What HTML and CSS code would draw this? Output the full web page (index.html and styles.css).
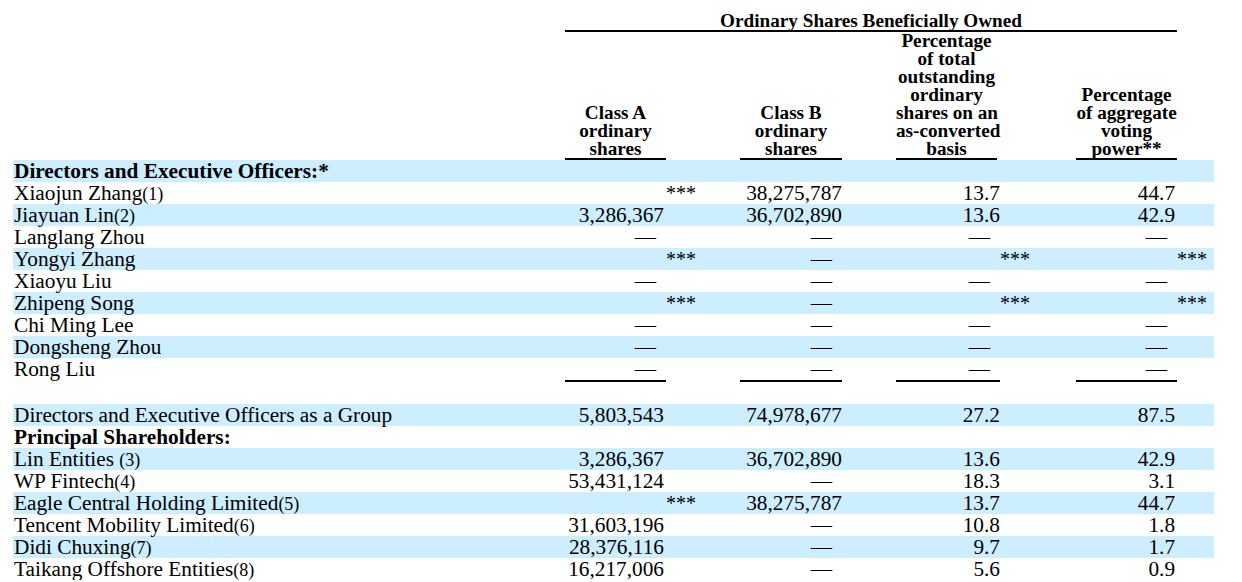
FILE: index.html
```html
<!DOCTYPE html>
<html>
<head>
<meta charset="utf-8">
<title>Ordinary Shares Beneficially Owned</title>
<link rel="stylesheet" href="styles.css">
</head>
<body>
<table class="own">
  <colgroup>
    <col class="c-name"><col class="c-a"><col class="c-at"><col class="c-b"><col class="c-bt"><col class="c-p"><col class="c-pt"><col class="c-v"><col class="c-vt">
  </colgroup>
  <thead>
    <tr class="grp">
      <th></th>
      <th colspan="7" class="grp-h"><div class="grp-title">Ordinary Shares Beneficially Owned</div></th>
      <th></th>
    </tr>
    <tr class="cols">
      <th></th>
      <th class="ch"><div class="ul">Class A<br>ordinary<br>shares</div></th>
      <th></th>
      <th class="ch"><div class="ul">Class B<br>ordinary<br>shares</div></th>
      <th></th>
      <th class="ch"><div class="ul ul-p">Percentage<br>of total<br>outstanding<br>ordinary<br>shares on an<br>as-converted<br>basis</div></th>
      <th></th>
      <th class="ch"><div class="ul">Percentage<br>of aggregate<br>voting<br>power**</div></th>
      <th></th>
    </tr>
  </thead>
  <tbody>
    <tr class="blue sect"><td class="name">Directors and Executive Officers:*</td><td></td><td></td><td></td><td></td><td></td><td></td><td></td><td></td></tr>
    <tr><td class="name">Xiaojun Zhang<span class="fn">(1)</span></td><td class="va"></td><td class="tr"><span class="ast">***</span></td><td class="vb">38,275,787</td><td></td><td class="vp">13.7</td><td></td><td class="vv">44.7</td><td></td></tr>
    <tr class="blue"><td class="name">Jiayuan Lin<span class="fn">(2)</span></td><td class="va">3,286,367</td><td></td><td class="vb">36,702,890</td><td></td><td class="vp">13.6</td><td></td><td class="vv">42.9</td><td></td></tr>
    <tr><td class="name">Langlang Zhou</td><td class="va dash">—</td><td></td><td class="vb dash">—</td><td></td><td class="vp dash">—</td><td></td><td class="vv dash">—</td><td></td></tr>
    <tr class="blue"><td class="name">Yongyi Zhang</td><td class="va"></td><td class="tr"><span class="ast">***</span></td><td class="vb dash">—</td><td></td><td class="vp"></td><td class="tr"><span class="ast">***</span></td><td class="vv"></td><td class="tr"><span class="ast">***</span></td></tr>
    <tr><td class="name">Xiaoyu Liu</td><td class="va dash">—</td><td></td><td class="vb dash">—</td><td></td><td class="vp dash">—</td><td></td><td class="vv dash">—</td><td></td></tr>
    <tr class="blue"><td class="name">Zhipeng Song</td><td class="va"></td><td class="tr"><span class="ast">***</span></td><td class="vb dash">—</td><td></td><td class="vp"></td><td class="tr"><span class="ast">***</span></td><td class="vv"></td><td class="tr"><span class="ast">***</span></td></tr>
    <tr><td class="name">Chi Ming Lee</td><td class="va dash">—</td><td></td><td class="vb dash">—</td><td></td><td class="vp dash">—</td><td></td><td class="vv dash">—</td><td></td></tr>
    <tr class="blue"><td class="name">Dongsheng Zhou</td><td class="va dash">—</td><td></td><td class="vb dash">—</td><td></td><td class="vp dash">—</td><td></td><td class="vv dash">—</td><td></td></tr>
    <tr class="last"><td class="name">Rong Liu</td><td class="va dash rule">—</td><td></td><td class="vb dash rule">—</td><td></td><td class="vp dash rule">—</td><td></td><td class="vv dash rule">—</td><td></td></tr>
    <tr class="spacer"><td></td><td></td><td></td><td></td><td></td><td></td><td></td><td></td><td></td></tr>
    <tr class="blue"><td class="name">Directors and Executive Officers as a Group</td><td class="va">5,803,543</td><td></td><td class="vb">74,978,677</td><td></td><td class="vp">27.2</td><td></td><td class="vv">87.5</td><td></td></tr>
    <tr class="sect"><td class="name">Principal Shareholders:</td><td></td><td></td><td></td><td></td><td></td><td></td><td></td><td></td></tr>
    <tr class="blue"><td class="name">Lin Entities <span class="fn">(3)</span></td><td class="va">3,286,367</td><td></td><td class="vb">36,702,890</td><td></td><td class="vp">13.6</td><td></td><td class="vv">42.9</td><td></td></tr>
    <tr><td class="name">WP Fintech<span class="fn">(4)</span></td><td class="va">53,431,124</td><td></td><td class="vb dash">—</td><td></td><td class="vp">18.3</td><td></td><td class="vv">3.1</td><td></td></tr>
    <tr class="blue"><td class="name">Eagle Central Holding Limited<span class="fn">(5)</span></td><td class="va"></td><td class="tr"><span class="ast">***</span></td><td class="vb">38,275,787</td><td></td><td class="vp">13.7</td><td></td><td class="vv">44.7</td><td></td></tr>
    <tr><td class="name">Tencent Mobility Limited<span class="fn">(6)</span></td><td class="va">31,603,196</td><td></td><td class="vb dash">—</td><td></td><td class="vp">10.8</td><td></td><td class="vv">1.8</td><td></td></tr>
    <tr class="blue"><td class="name">Didi Chuxing<span class="fn">(7)</span></td><td class="va">28,376,116</td><td></td><td class="vb dash">—</td><td></td><td class="vp">9.7</td><td></td><td class="vv">1.7</td><td></td></tr>
    <tr><td class="name">Taikang Offshore Entities<span class="fn">(8)</span></td><td class="va">16,217,006</td><td></td><td class="vb dash">—</td><td></td><td class="vp">5.6</td><td></td><td class="vv">0.9</td><td></td></tr>
  </tbody>
</table>
</body>
</html>
```

FILE: styles.css
```css
html, body {
  margin: 0;
  padding: 0;
  background: #ffffff;
}

body {
  font-family: "Liberation Serif", "Times New Roman", serif;
  color: #000000;
}

.own {
  table-layout: fixed;
  width: 1201px;
  margin-left: 13px;
  border-collapse: separate;
  border-spacing: 0;
  font-size: 21.3px;
  line-height: 22px;
}

.c-name { width: 552px; }
.c-a { width: 101px; }
.c-at { width: 74px; }
.c-b { width: 102px; }
.c-bt { width: 54px; }
.c-p { width: 104px; }
.c-pt { width: 76px; }
.c-v { width: 101px; }
.c-vt { width: 37px; }

th, td {
  padding: 0;
  white-space: nowrap;
}

thead th {
  font-size: 19.2px;
  line-height: 18px;
  font-weight: bold;
  text-align: center;
  vertical-align: bottom;
}

.grp th {
  padding-top: 12px;
}

.grp-title {
  border-bottom: 2px solid #000;
}

.ul {
  border-bottom: 2px solid #000;
}

.ul-p {
  margin-right: 3px;
}

tbody td {
  vertical-align: top;
  height: 22px;
}

.blue td {
  background: #cceeff;
}

.name {
  padding-left: 1px;
  text-align: left;
}

.sect td {
  font-weight: bold;
}

.fn {
  font-size: 18px;
  line-height: 0;
}

.va, .vb, .vp, .vv {
  text-align: right;
}

.va { padding-right: 2px; }
.vb { padding-right: 0; }
.vp { padding-right: 0; }
.vv { padding-right: 2px; }

td.dash {
  padding-right: 10px;
}

.tr {
  text-align: left;
}

.ast {
  font-size: 20px;
  line-height: 0;
}

td.rule {
  border-bottom: 2px solid #000;
}
```
